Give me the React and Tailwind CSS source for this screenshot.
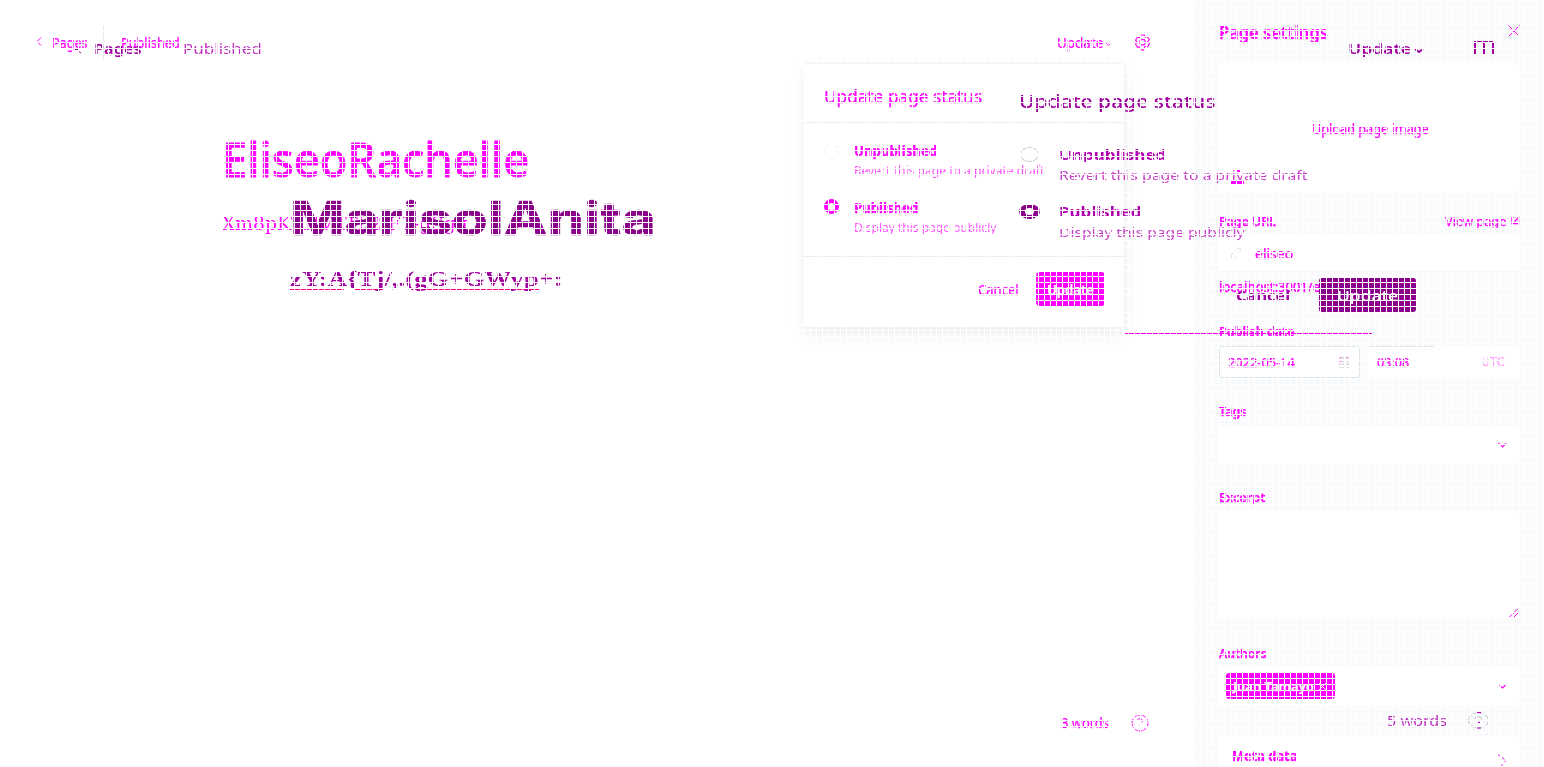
import { useLayoutEffect, useRef, useState } from "react";

// Text stretched horizontally to fill a given width.
function Fit({ w, className = "", children }) {
  const ref = useRef(null);
  const [scale, setScale] = useState(1);
  useLayoutEffect(() => {
    setScale(w / ref.current.offsetWidth);
  }, [w]);
  return (
    <span className="flex h-5 items-start" style={{ width: w }}>
      <span
        ref={ref}
        className={"inline-block shrink-0 origin-left whitespace-nowrap " + className}
        style={{ transform: `scaleX(${scale})` }}
      >
        {children}
      </span>
    </span>
  );
}

const Chevron = ({ className = "" }) => (
  <svg className={className} width="9" height="6" viewBox="0 0 9 6" fill="none" stroke="currentColor" strokeWidth="1.1">
    <path d="M0.5 1L4.5 5L8.5 1" />
  </svg>
);

function Option({ title, text, titleW, textW, on }) {
  return (
    <div className="flex h-[57px] gap-[15px]">
      <span className={on ? "mt-[7px] h-[15px] w-[15px] rounded-full border-[4px] border-[#ff00ff]" : "mt-[9px] h-[15px] w-[15px] rounded-full border border-dashed border-[#e8e8e8]"} />
      <div className="pt-[6px]">
        <div className="h-[19px]"><Fit w={titleW} className="text-sm leading-5 font-bold">{title}</Fit></div>
        <Fit w={textW} className="text-[13px] leading-5 opacity-70 [-webkit-text-stroke:0px]">{text}</Fit>
      </div>
    </div>
  );
}

function WideOption({ title, text, titleW, textW, on }) {
  return (
    <div className="flex h-[57px]">
      <span className={on ? "mt-[8px] h-[15px] w-[21px] rounded-[50%] border-x-[6px] border-y-[4px] border-[#8b008b]" : "mx-[1px] mt-[8px] h-[15px] w-[19px] rounded-[50%] border border-[#cccccc]"} />
      <div className="ml-[19px] pt-[6px]">
        <Fit w={titleW} className="text-sm leading-5 font-bold text-[#b000b0]">{title}</Fit>
        <Fit w={textW} className="text-[13px] leading-5 text-[#c840c8]">{text}</Fit>
      </div>
    </div>
  );
}

function Editor() {
  return (
    <main className="relative h-full w-[1195px] bg-white [-webkit-text-stroke:0.25px]">
      <header className="flex h-[86px] items-center pl-[36px]">
        <svg className="mb-[3px]" width="6" height="9" viewBox="0 0 6 9" fill="none" stroke="currentColor"><path d="M5 .5L1 4.5L5 8.5" /></svg>
        <div className="ml-[10px]"><Fit w={36} className="text-sm leading-[19px]">Pages</Fit></div>
        <span className="ml-[15px] h-[35px] w-px bg-[#e8e8e8]" />
        <div className="ml-[17px]"><Fit w={59} className="text-sm leading-[19px]">Published</Fit></div>
        <div className="ml-[877px]"><Fit w={46} className="text-sm leading-5">Update</Fit></div>
        <Chevron className="mt-[2px] ml-[2px] w-[7px]" />
        <svg className="mb-[2px] ml-[22px]" width="17" height="17" viewBox="0 0 17 17" fill="none" stroke="currentColor" strokeWidth="1.1">
          <path d="M6.5 1h4l.7 2.2 2.2-.5 2 3-1.7 2 1.7 2-2 3.2-2.5-.6L9.5 16h-2L6 12.7l-2.5.6-2-3.2 1.6-2-1.6-2 2-3 2.3.5z" /><circle cx="8.5" cy="8.2" r="2.8" />
        </svg>
      </header>
      <div className="pl-[222px]">
        <div className="pt-[41px]">
          <Fit w={307} className="text-[48px] leading-[64px] font-medium [-webkit-text-stroke:0.8px]">EliseoRachelle</Fit>
        </div>
        <div className="pt-[66px]">
          <Fit w={246} className="font-['DejaVu_Serif',serif] text-[19px] leading-5 [-webkit-text-stroke:0px]">Xm8pKTNVdTh2:F7-gSgq</Fit>
        </div>
      </div>
      <section className="absolute top-[63px] left-[804px] h-[265px] w-[321px] rounded-[3px] border border-[#f0f0f0] bg-white shadow-[0_6px_16px_rgba(0,0,0,0.08)]">
        <div className="flex h-[59px] items-center border-b border-[#e6edf3] pt-[6px] pl-[19px]">
          <Fit w={158} className="text-[18px] leading-5">Update page status</Fit>
        </div>
        <div className="h-[134px] border-b border-[#e6edf3] pt-[12px] pl-[19px]">
          <Option title="Unpublished" text="Revert this page to a private draft" titleW={83} textW={190} />
          <Option title="Published" text="Display this page publicly" titleW={64} textW={142} on />
        </div>
        <div className="flex h-[64px] items-center justify-end pr-[19px]">
          <Fit w={41} className="text-sm leading-[22px]">Cancel</Fit>
          <div className="ml-[17px] flex h-[34px] w-[69px] items-center justify-center rounded-[4px] bg-[#ff00ff] text-white">
            <Fit w={47} className="text-sm leading-[22px] font-semibold">Update</Fit>
          </div>
        </div>
      </section>
      <div className="absolute top-[713px] left-[1061px] flex items-center">
        <Fit w={48} className="text-sm leading-5">3 words</Fit>
        <svg className="ml-[22px]" width="18" height="18" viewBox="0 0 18 18" fill="none" stroke="currentColor" strokeDasharray="4 1"><circle cx="9" cy="9" r="8" /><path d="M6.5 7C6.5 3.5 11.5 4 11.5 7C11.5 9 9 8.5 9 11" /></svg>
      </div>
    </main>
  );
}

const Label = ({ w, children }) => <Fit w={w} className="text-[13px] leading-5 font-semibold">{children}</Fit>;

function Sidebar() {
  return (
    <aside className="h-full w-[349px] bg-[#f9fafc] pr-[24px] pl-[23px] [-webkit-text-stroke:0.25px]">
      <div className="flex h-[63px] items-center justify-between pl-[1px]">
        <Fit w={109} className="text-[18px] leading-5 font-semibold">Page settings</Fit>
        <svg className="mb-[1px]" width="12" height="12" viewBox="0 0 12 12" fill="none" stroke="currentColor"><path d="M.5 .5l11 11M11.5 .5l-11 11" /></svg>
      </div>
      <div className="flex h-[129px] flex-col rounded-[4px] bg-white">
        <div className="mt-[49px] ml-[83px] flex h-[33px] w-[139px] items-center justify-center">
          <Fit w={117} className="text-sm leading-5">Upload page image</Fit>
        </div>
        <svg className="mt-[25px] ml-[13px]" width="13" height="14" viewBox="0 0 13 14" fill="currentColor"><path d="M5 0h4v2H5z" /><path d="M0 11h13v3H0z" /></svg>
      </div>
      <div className="mt-[19px] flex h-[23px] items-start justify-between pl-[1px]">
        <Label w={57}>Page URL</Label>
        <div className="flex items-center gap-[5px]">
          <Fit w={61} className="text-[13px] leading-5">View page</Fit>
          <svg className="mb-[1px]" width="9" height="9" viewBox="0 0 9 9" fill="none" stroke="currentColor" strokeWidth="1.4"><path d="M5 .5H1v7h6.5V4M3.5 5.5l5-5" /></svg>
        </div>
      </div>
      <div className="flex h-[38px] items-center rounded-[4px] border border-white border-b-[#f4f7f9] bg-white pl-[11px]">
        <svg width="12" height="13" viewBox="0 0 12 13" fill="none" stroke="#e0e0e0"><path d="M5 4l2-2q3-2 4 1l-4 4M7 8l-3 4q-3 0-3-4l3-3" /></svg>
        <div className="ml-[13px]"><Fit w={38} className="text-[14px] leading-[22px]">eliseo</Fit></div>
      </div>
      <div className="mt-[5px] ml-[1px] h-[44px]"><Fit w={105} className="text-[14px] leading-5 font-medium">localhost:3001/el</Fit></div>
      <div className="ml-[1px] h-[25px]"><Label w={76}>Publish date</Label></div>
      <div className="flex gap-[8px] pl-[1px]">
        <div className="flex h-[32px] w-[141px] items-center justify-between rounded-[3px] border border-[#d8e3e9] bg-white pr-[9px] pl-[8px]">
          <Fit w={67} className="text-[13px] leading-5">2022-05-14</Fit>
          <svg width="12" height="15" viewBox="0 0 12 15" fill="none" stroke="#dddddd" strokeDasharray="3 1"><path d="M0 3h12M0 6h12M0 9h12M0 12h12" strokeWidth="2" /><path d="M3 2v8M9 2v2" stroke="#f0f" strokeDasharray="1 3" /></svg>
        </div>
        <div className="flex h-[32px] w-[152px] flex-col rounded-[3px] bg-white">
          <span className="h-px w-[66px] bg-[#d8e3e9]" />
          <div className="flex h-[30px] items-center justify-between pr-[15px] pl-[9px]">
            <Fit w={32} className="text-[13px] leading-5">03:08</Fit>
            <Fit w={24} className="text-[12px] leading-5 opacity-40">UTC</Fit>
          </div>
        </div>
      </div>
      <div className="mt-[23px] ml-[1px] h-[25px]"><Label w={28}>Tags</Label></div>
      <div className="flex h-[38px] items-center justify-end rounded-[4px] bg-white pr-[13px]"><Chevron /></div>
      <div className="mt-[23px] ml-[1px] h-[23px]"><Label w={46}>Excerpt</Label></div>
      <div className="flex h-[109px] items-end justify-end rounded-[4px] bg-white p-[1px]">
        <svg width="10" height="10" viewBox="0 0 10 10" fill="none" stroke="currentColor"><path d="M.5 9L9 .5M5 9l4-4" /></svg>
      </div>
      <div className="mt-[24px] ml-[1px] h-[23px]"><Label w={48}>Authors</Label></div>
      <div className="flex h-[40px] items-center justify-between rounded-[4px] bg-white pr-[13px] pl-[8px]">
        <div className="flex h-[26px] w-[109px] items-center rounded-[3px] bg-[#ff00ff] pl-[7px] text-white">
          <Fit w={81} className="text-[13px] leading-5 font-semibold">Juan Tamayo</Fit>
          <svg className="ml-[5px]" width="7" height="7" viewBox="0 0 7 7" stroke="currentColor"><path d="M0 0l7 7M7 0L0 7" /></svg>
        </div>
        <Chevron />
      </div>
      <div className="mt-[30px] flex h-[60px] items-start justify-between rounded-t-[4px] bg-white pt-[10px] pr-[13px] pl-[14px]">
        <Fit w={65} className="text-[14px] leading-5 font-bold">Meta data</Fit>
        <svg className="mt-[8px]" width="9" height="13" viewBox="0 0 9 13" fill="none" stroke="currentColor" strokeDasharray="3 2"><path d="M0 .5l8 6-5 5.5" /></svg>
      </div>
    </aside>
  );
}

// Second, wider copy of the editor chrome drawn above the first.
function WideEditor() {
  return (
    <div className="absolute inset-0 text-[#a000a0]">
      <div className="flex h-[58px] items-end pl-[75px]">
        <svg className="mb-[4px]" width="7" height="5" viewBox="0 0 7 5" fill="none" stroke="currentColor"><path d="M0 .5h4M3 2l3 2" /></svg>
        <div className="ml-[12px]"><Fit w={48} className="text-sm leading-[22px] font-semibold">Pages</Fit></div>
        <div className="ml-[41px]"><Fit w={79} className="text-sm leading-[22px] text-[#c030c0]">Published</Fit></div>
        <div className="ml-[1086px]"><Fit w={63} className="text-sm leading-[22px] font-semibold">Update</Fit></div>
        <svg className="mb-[4px] ml-[3px]" width="10" height="6" viewBox="0 0 10 6" fill="none" stroke="currentColor" strokeWidth="2"><path d="M1 1L5 4L9 1" /></svg>
        <svg className="mb-[4px] ml-[49px]" width="21" height="14" viewBox="0 0 21 14" fill="none" stroke="currentColor" strokeWidth="2"><path d="M2 14V3M11 14V3M20 14V3" /><path d="M1 1.5h19" strokeWidth="1" /></svg>
      </div>
      <div className="pl-[290px]">
        <div className="pt-[124px]">
          <Fit w={366} className="font-[Inter,sans-serif] text-[46px] leading-[72px] font-bold text-[#8b008b] mix-blend-multiply [-webkit-text-stroke:0.6px]">MarisolAnita</Fit>
        </div>
        <div className="pt-[67px]">
          <Fit w={273} className="font-['Liberation_Serif',serif] text-[21px] leading-5 font-bold">{"zY:A{Tj/,.(gG+GWyp+:"}</Fit>
        </div>
        <div className="flex h-px">
          <span className="w-[54px] bg-[#ff0090]" /><span className="ml-[11px] w-[28px] bg-[#ff0090]" /><span className="ml-[33px] w-[123px] bg-[#ff0090]" />
        </div>
      </div>
      <section className="absolute top-[82px] left-[1019px] h-[252px] w-[400px]">
        <div className="h-[57px] pt-[9px]"><Fit w={196} className="text-[18px] leading-5 font-medium">Update page status</Fit></div>
        <div className="h-[139px]">
          <WideOption title="Unpublished" text="Revert this page to a private draft" titleW={107} textW={248} />
          <WideOption title="Published" text="Display this page publicly" titleW={82} textW={185} on />
        </div>
        <div className="flex h-[34px] items-center pl-[217px]">
          <Fit w={54} className="text-sm leading-[22px] font-bold">Cancel</Fit>
          <div className="ml-[29px] flex h-[34px] w-[97px] items-center justify-center rounded-[3px] bg-[#8b008b] text-white">
            <Fit w={61} className="text-sm leading-[22px] font-medium">Update</Fit>
          </div>
        </div>
        <div className="mt-[21px] ml-[106px] h-px w-[247px] bg-[#f000e0]" />
      </section>
      <div className="absolute top-[710px] left-[1387px] flex items-center">
        <Fit w={60} className="text-sm leading-[21px] text-[#c030c0]">5 words</Fit>
        <svg className="ml-[21px]" width="21" height="17" viewBox="0 0 21 17" fill="none" stroke="#bbbbbb"><ellipse cx="10.5" cy="8.5" rx="10" ry="7.5" strokeDasharray="5 1" /><path d="M7 7C7 4 14 4 14 7C14 9 11 8 11 10" /><path d="M8 .5h5M8 16h5M10 10.5h2" stroke="#c000c0" /></svg>
      </div>
    </div>
  );
}

export default function App() {
  return (
    <div className="relative flex h-[767px] w-[1544px] overflow-hidden bg-white font-['Noto_Sans',sans-serif] text-[#ff00ff]">
      <Editor />
      <Sidebar />
      <WideEditor />
      <div className="pointer-events-none absolute inset-0 bg-[linear-gradient(to_right,#fff_1px,transparent_1px),linear-gradient(to_bottom,#fff_1px,transparent_1px)] bg-[size:6px_6px]" />
    </div>
  );
}
